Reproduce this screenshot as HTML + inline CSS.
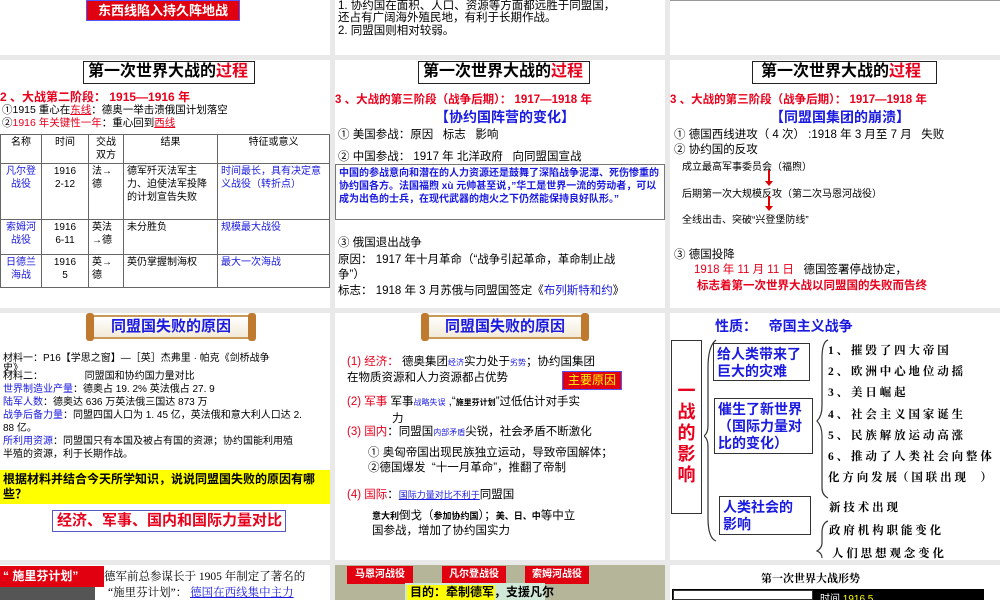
<!DOCTYPE html>
<html><head><meta charset="utf-8">
<style>
*{margin:0;padding:0;box-sizing:border-box}
body{width:1000px;height:600px;background:#e9e9e9;position:relative;overflow:hidden;font-family:"Liberation Sans","Noto Sans CJK SC",sans-serif;color:#000}
.s{position:absolute;background:#fff;overflow:hidden}
.a{position:absolute;white-space:nowrap}
.r{color:#e8001c}.b{color:#1a1ae0}
.tt{position:absolute;border:1.5px solid #222;font-size:16px;font-weight:bold;padding:0 4px;line-height:20px;height:23px;background:#fff;white-space:nowrap;overflow:hidden}
table{border-collapse:collapse;position:absolute;font-size:10px}
td{border:1px solid #666;vertical-align:top;padding:1px 3px;line-height:13px}
.sc{position:absolute;height:24px;border-top:2px solid #c89a5a;border-bottom:2px solid #c89a5a;background:linear-gradient(#fff,#f3ead8);font-weight:bold;color:#1a1ae0;font-size:15px;line-height:20px;text-align:center}
.sc:before,.sc:after{content:"";position:absolute;top:-4px;width:8px;height:28px;background:#c07a30;border-radius:3px}
.sc:before{left:-4px}.sc:after{right:-4px}
.bx{position:absolute;border:1.5px solid #333;color:#1a1ae0;font-weight:bold;font-size:14px;line-height:17px;padding:2px 3px}
</style></head><body>

<!-- Row 1 -->
<div class="s" style="left:0;top:0;width:330px;height:55px">
 <div class="a" style="left:86px;top:0;width:154px;height:21px;background:#e00010;border:1px solid #55f;color:#fff;font-size:13px;font-weight:bold;line-height:20px;text-align:center">东西线陷入持久阵地战</div>
</div>
<div class="s" style="left:335px;top:0;width:330px;height:55px;font-size:11.5px;line-height:13px">
 <div class="a" style="left:3px;top:0">1. 协约国在面积、人口、资源等方面都远胜于同盟国，</div>
 <div class="a" style="left:3px;top:12px">还占有广阔海外殖民地，有利于长期作战。</div>
 <div class="a" style="left:3px;top:25px">2. 同盟国则相对较弱。</div>
</div>
<div class="s" style="left:670px;top:0;width:330px;height:55px;border-top:1px solid #999"></div>

<!-- Row 2 col 1 -->
<div class="s" style="left:0;top:60px;width:330px;height:248px">
 <div class="tt" style="left:83px;top:1px;width:172px">第一次世界大战的<span class="r">过程</span></div>
 <div class="a r" style="left:0;top:28px;font-size:12px;font-weight:bold">2 、大战第二阶段： 1915—1916 年</div>
 <div class="a" style="left:2px;top:42px;font-size:10.5px">①1915 重心在<span class="r"><u>东线</u></span>：德奥一举击溃俄国计划落空</div>
 <div class="a" style="left:2px;top:55px;font-size:10.5px">②<span class="r">1916 年关键性一年</span>：重心回到<span class="r"><u>西线</u></span></div>
 <table style="left:0;top:74px;width:330px">
  <tr style="height:29px"><td style="width:41px;text-align:center">名称</td><td style="width:47px;text-align:center">时间</td><td style="width:35px;text-align:center">交战双方</td><td style="width:94px;text-align:center">结果</td><td style="text-align:center">特征或意义</td></tr>
  <tr style="height:56px"><td class="b" style="text-align:center">凡尔登战役</td><td style="text-align:center">1916<br>2-12</td><td>法→德</td><td>德军歼灭法军主力、迫使法军投降的计划宣告失败</td><td class="b">时间最长，具有决定意义战役（转折点）</td></tr>
  <tr style="height:35px"><td class="b" style="text-align:center">索姆河战役</td><td style="text-align:center">1916<br>6-11</td><td>英法→德</td><td>未分胜负</td><td class="b">规模最大战役</td></tr>
  <tr style="height:33px"><td class="b" style="text-align:center">日德兰海战</td><td style="text-align:center">1916<br>5</td><td>英→德</td><td>英仍掌握制海权</td><td class="b">最大一次海战</td></tr>
 </table>
</div>

<!-- Row 2 col 2 -->
<div class="s" style="left:335px;top:60px;width:330px;height:248px">
 <div class="tt" style="left:83px;top:1px;width:172px">第一次世界大战的<span class="r">过程</span></div>
 <div class="a r" style="left:0;top:31px;font-size:11.5px;font-weight:bold">3 、大战的第三阶段（战争后期）： 1917—1918 年</div>
 <div class="a b" style="left:100px;top:47px;font-size:14px;font-weight:bold">【协约国阵营的变化】</div>
 <div class="a" style="left:3px;top:66px;font-size:11.5px">① 美国参战：原因 &nbsp; 标志 &nbsp; 影响</div>
 <div class="a" style="left:3px;top:88px;font-size:11.5px">② 中国参战： 1917 年 北洋政府 &nbsp; 向同盟国宣战</div>
 <div class="a b" style="left:0;top:104px;width:330px;height:56px;border:1px solid #777;font-size:10px;line-height:13px;padding:2px 3px;white-space:normal;font-weight:bold">中国的参战意向和潜在的人力资源还是鼓舞了深陷战争泥潭、死伤惨重的协约国各方。法国福煦 xù 元帅甚至说，”华工是世界一流的劳动者，可以成为出色的士兵，在现代武器的炮火之下仍然能保持良好队形。”</div>
 <div class="a" style="left:3px;top:174px;font-size:11.5px">③ 俄国退出战争</div>
 <div class="a" style="left:3px;top:191px;font-size:11.5px">原因： 1917 年十月革命（“战争引起革命，革命制止战</div>
 <div class="a" style="left:3px;top:206px;font-size:11.5px">争”）</div>
 <div class="a" style="left:3px;top:222px;font-size:11.5px">标志： 1918 年 3 月苏俄与同盟国签定《<span class="b">布列斯特和约</span>》</div>
</div>

<!-- Row 2 col 3 -->
<div class="s" style="left:670px;top:60px;width:330px;height:248px">
 <div class="tt" style="left:82px;top:1px;width:185px;padding-left:8px">第一次世界大战的<span class="r">过程</span></div>
 <div class="a r" style="left:0;top:31px;font-size:11.5px;font-weight:bold">3 、大战的第三阶段（战争后期）： 1917—1918 年</div>
 <div class="a b" style="left:100px;top:47px;font-size:14px;font-weight:bold">【同盟国集团的崩溃】</div>
 <div class="a" style="left:4px;top:66px;font-size:11.5px">① 德国西线进攻（ 4 次） :1918 年 3 月至 7 月 &nbsp; 失败</div>
 <div class="a" style="left:4px;top:81px;font-size:11.5px">② 协约国的反攻</div>
 <div class="a" style="left:12px;top:98px;font-size:10px">成立最高军事委员会（福煦）</div>
 <div class="a" style="left:12px;top:125px;font-size:10px">后期第一次大规模反攻（第二次马恩河战役）</div>
 <div class="a" style="left:12px;top:151px;font-size:10px">全线出击、突破“兴登堡防线”</div>
 <div class="a" style="left:98px;top:110px;width:2px;height:14px;background:#d00"></div>
 <div class="a" style="left:95px;top:121px;border:4px solid transparent;border-top:5px solid #d00"></div>
 <div class="a" style="left:98px;top:136px;width:2px;height:13px;background:#d00"></div>
 <div class="a" style="left:95px;top:146px;border:4px solid transparent;border-top:5px solid #d00"></div>
 <div class="a" style="left:4px;top:186px;font-size:11.5px">③ 德国投降</div>
 <div class="a" style="left:24px;top:201px;font-size:11.5px"><span class="r">1918 年 11 月 11 日</span> &nbsp; 德国签署停战协定，</div>
 <div class="a r" style="left:27px;top:217px;font-size:11.5px;font-weight:bold">标志着第一次世界大战以同盟国的失败而告终</div>
</div>

<!-- Row 3 col 1 -->
<div class="s" style="left:0;top:313px;width:330px;height:247px;font-size:10px;line-height:13px">
 <div class="sc" style="left:90px;top:2px;width:162px">同盟国失败的原因</div>
 <div class="a" style="left:3px;top:39px">材料一：P16【学思之窗】—［英］杰弗里 · 帕克《剑桥战争</div>
 <div class="a" style="left:3px;top:49px">史》</div>
 <div class="a" style="left:3px;top:57px">材料二： &nbsp; &nbsp; &nbsp; &nbsp; &nbsp; &nbsp; &nbsp; 同盟国和协约国力量对比</div>
 <div class="a" style="left:3px;top:70px"><span class="b">世界制造业产量</span>：德奥占 19. 2% 英法俄占 27. 9</div>
 <div class="a" style="left:3px;top:83px"><span class="b">陆军人数</span>：德奥达 636 万英法俄三国达 873 万</div>
 <div class="a" style="left:3px;top:96px"><span class="b">战争后备力量</span>：同盟四国人口为 1. 45 亿，英法俄和意大利人口达 2.</div>
 <div class="a" style="left:3px;top:109px">88 亿。</div>
 <div class="a" style="left:3px;top:122px"><span class="b">所利用资源</span>：同盟国只有本国及被占有国的资源；协约国能利用殖</div>
 <div class="a" style="left:3px;top:135px">半殖的资源，利于长期作战。</div>
 <div class="a" style="left:0;top:157px;width:330px;height:34px;background:#ffff00;font-size:12px;font-weight:bold;line-height:15px;padding:2px 3px;white-space:normal">根据材料并结合今天所学知识，说说同盟国失败的原因有哪些？</div>
 <div class="a r" style="left:52px;top:197px;width:234px;height:22px;border:1.5px solid #55c;font-size:15px;font-weight:bold;line-height:19px;padding-left:4px">经济、军事、国内和国际力量对比</div>
</div>

<!-- Row 3 col 2 -->
<div class="s" style="left:335px;top:313px;width:330px;height:247px;font-size:11.5px">
 <div class="sc" style="left:90px;top:2px;width:160px">同盟国失败的原因</div>
 <div class="a" style="left:12px;top:40px"><span class="r">(1) 经济：</span> 德奥集团<span class="b" style="font-size:8px">经济</span>实力处于<span class="b" style="font-size:8px">劣势</span>；协约国集团</div>
 <div class="a" style="left:12px;top:56px">在物质资源和人力资源都占优势</div>
 <div class="a" style="left:227px;top:58px;width:60px;height:19px;background:#e00010;border:1px solid #55f;color:#ff0;font-size:12px;line-height:17px;text-align:center">主要原因</div>
 <div class="a" style="left:12px;top:80px"><span class="r">(2) 军事</span> 军事<span class="b" style="font-size:8px">战略失误</span> ,“<b style="font-size:8px">施里芬计划</b>”过低估计对手实</div>
 <div class="a" style="left:57px;top:97px">力</div>
 <div class="a" style="left:12px;top:110px"><span class="r">(3) 国内</span>：同盟国<span class="b" style="font-size:8px">内部矛盾</span>尖锐，社会矛盾不断激化</div>
 <div class="a" style="left:33px;top:131px">① 奥匈帝国出现民族独立运动，导致帝国解体；</div>
 <div class="a" style="left:33px;top:146px">②德国爆发 &nbsp;“十一月革命”，推翻了帝制</div>
 <div class="a" style="left:12px;top:173px"><span class="r">(4) 国际</span>：<span class="b" style="font-size:9px"><u>国际力量对比不利于</u></span>同盟国</div>
 <div class="a" style="left:37px;top:194px"><b style="font-size:9px">意大利</b>倒戈（<b style="font-size:9px">参加协约国</b>）；<b style="font-size:9px">美、日、中</b>等中立</div>
 <div class="a" style="left:37px;top:209px">国参战，增加了协约国实力</div>
</div>

<!-- Row 3 col 3 -->
<div class="s" style="left:670px;top:313px;width:330px;height:247px">
 <div class="a b" style="left:45px;top:3px;font-size:14px;font-weight:bold">性质： &nbsp; 帝国主义战争</div>
 <div class="a r" style="left:1px;top:27px;width:31px;height:174px;border:1.5px solid #333;font-size:18px;font-weight:bold;line-height:21px;text-align:center;white-space:normal;padding-top:40px">一战的影响</div>
 <svg class="a" style="left:34px;top:25px" width="20" height="205"><path d="M12 2 Q4 8 4 30 L4 88 Q4 95 0 98 Q4 101 4 108 L4 180 Q4 200 12 203" fill="none" stroke="#333" stroke-width="1.2"/></svg>
 <div class="bx" style="left:43px;top:30px;width:97px;height:38px">给人类带来了<br>巨大的灾难</div>
 <div class="bx" style="left:44px;top:85px;width:99px;height:56px">催生了新世界<br>（国际力量对<br>比的变化）</div>
 <div class="bx" style="left:49px;top:183px;width:92px;height:39px">人类社会的<br>影响</div>
 <svg class="a" style="left:146px;top:25px" width="14" height="220"><path d="M12 2 Q6 4 6 20 L6 68 Q6 78 1 83 Q6 88 6 98 L6 150 Q6 157 12 160 M12 183 Q6 185 6 195 L6 205 Q6 210 1 213 Q6 215 6 220" fill="none" stroke="#333" stroke-width="1.2"/></svg>
 <div class="a" style="left:158px;top:28px;font-size:11.5px;line-height:21.2px;font-weight:bold;font-family:'Liberation Serif','Noto Serif CJK SC',serif">1 、 摧 毁 了 四 大 帝 国<br>2 、 欧 洲 中 心 地 位 动 摇<br>3 、 美 日 崛 起<br>4 、 社 会 主 义 国 家 诞 生<br>5 、 民 族 解 放 运 动 高 涨<br>6 、 推 动 了 人 类 社 会 向 整 体<br>化 方 向 发 展（ 国 联 出 现 &nbsp; &nbsp; ）</div>
 <div class="a" style="left:159px;top:184px;font-size:11.5px;line-height:23px;font-weight:bold;font-family:'Liberation Serif','Noto Serif CJK SC',serif">新 技 术 出 现<br>政 府 机 构 职 能 变 化<br>&nbsp;人 们 思 想 观 念 变 化</div>
</div>

<!-- Row 4 -->
<div class="s" style="left:0;top:565px;width:330px;height:35px">
 <div class="a" style="left:0;top:1px;width:104px;height:21px;background:#e00010;color:#fff;font-size:12px;font-weight:bold;line-height:20px;padding-left:3px">“ 施里芬计划”</div>
 <div class="a" style="left:0;top:22px;width:95px;height:13px;background:#555"></div>
 <div class="a" style="left:104px;top:3px;font-size:11.5px;font-family:'Liberation Serif','Noto Serif CJK SC',serif">德军前总参谋长于 1905 年制定了著名的</div>
 <div class="a" style="left:108px;top:19px;font-size:11.5px;font-family:'Liberation Serif','Noto Serif CJK SC',serif">“施里芬计划”： <span class="b"><u>德国在西线集中主力</u></span></div>
</div>
<div class="s" style="left:335px;top:565px;width:330px;height:35px;background:#b5b59a">
 <div class="a" style="left:12px;top:1px;width:66px;height:18px;background:#e00010;color:#fff;font-size:10px;font-weight:bold;line-height:18px;text-align:center">马恩河战役</div>
 <div class="a" style="left:107px;top:1px;width:64px;height:18px;background:#e00010;color:#fff;font-size:10px;font-weight:bold;line-height:18px;text-align:center">凡尔登战役</div>
 <div class="a" style="left:190px;top:1px;width:64px;height:18px;background:#e00010;color:#fff;font-size:10px;font-weight:bold;line-height:18px;text-align:center">索姆河战役</div>
 <div class="a" style="left:70px;top:18px;width:140px;height:17px;background:#cfe8d8"></div>
 <div class="a" style="left:72px;top:20px;width:88px;height:15px;background:#ff0;color:#000;font-size:12px;font-weight:bold;line-height:15px;padding-left:3px">目的：牵制德军，支援凡尔</div>
</div>
<div class="s" style="left:670px;top:565px;width:330px;height:35px">
 <div class="a" style="left:91px;top:5px;font-size:11px;font-weight:bold;font-family:'Liberation Serif','Noto Serif CJK SC',serif">第一次世界大战形势</div>
 <div class="a" style="left:2px;top:24px;width:312px;height:11px;background:#000"></div>
 <div class="a" style="left:3px;top:25px;width:140px;height:10px;background:#fff;border:1px solid #333"></div>
 <div class="a" style="left:150px;top:25px;color:#fff;font-size:10px">时间 <span style="color:#ff0">1916.5</span></div>
</div>
</body></html>
